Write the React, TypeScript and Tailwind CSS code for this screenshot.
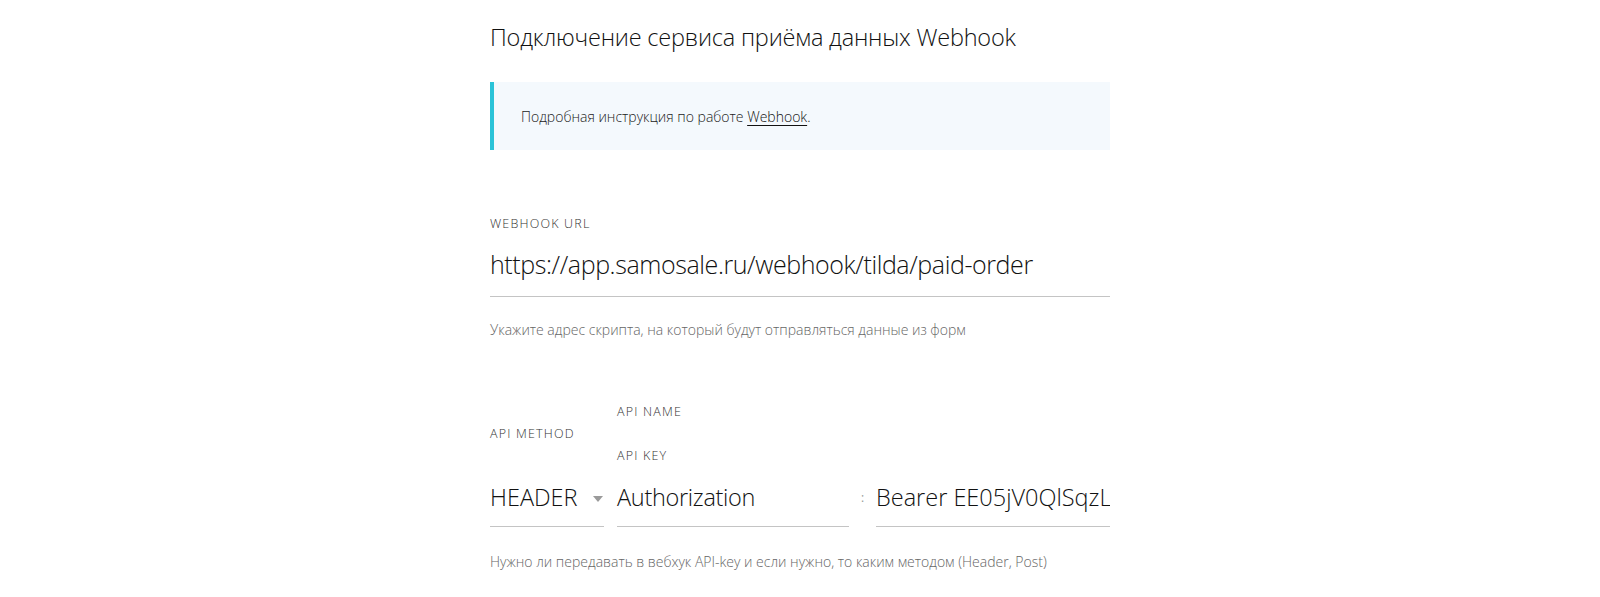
import React from "react";

const font = { fontFamily: '"Open Sans", "Liberation Sans", sans-serif' };

export default function App() {
  return (
    <div className="w-full min-h-[597px] bg-white text-[#000]" style={font}>
      <div className="w-[620px] mx-auto pt-[22px]">
        <h1 className="text-[23.5px] leading-[30px] font-light text-[#111] tracking-[-0.2px]">
          Подключение сервиса приёма данных Webhook
        </h1>
        <div className="mt-[30px] h-[68px] bg-[#f4f9fd] border-l-[4px] border-[#2bc3d8] flex items-center pl-[27px]">
          <p className="text-[14px] font-light text-[#222] leading-[20px] pt-[2px]">
            Подробная инструкция по работе{" "}
            <a className="underline underline-offset-[3px] text-[#111]">Webhook</a>.
          </p>
        </div>

        <div className="mt-[66px]">
          <div className="text-[12.5px] leading-[16px] font-light tracking-[1.2px] text-[#333] uppercase">
            Webhook URL
          </div>
          <div className="mt-[15px] border-b border-[#c4c4c4] pb-[15px]">
            <div className="text-[25px] leading-[34px] font-light text-[#111] tracking-[-0.4px]">
              https://app.samosale.ru/webhook/tilda/paid-order
            </div>
          </div>
          <div className="mt-[24px] text-[14px] leading-[18px] font-light text-[#666]">
            Укажите адрес скрипта, на который будут отправляться данные из форм
          </div>
        </div>

        <div className="mt-[65px] flex items-end">
          <div className="w-[114px] shrink-0">
            <div className="h-[60px] flex items-center">
              <span className="text-[12.5px] leading-[16px] font-light tracking-[1.2px] text-[#333] uppercase">
                Api method
              </span>
            </div>
            <div className="mt-[7px] border-b border-[#c4c4c4] h-[56px] pb-[12px] flex items-end justify-between">
              <span className="text-[23.5px] leading-[34px] font-light text-[#111]">HEADER</span>
              <svg width="10" height="6" viewBox="0 0 10 6" className="mr-[1px] mb-[12px]">
                <polygon points="0,0 10,0 5,6" fill="#9a9a9a" />
              </svg>
            </div>
          </div>
          <div className="ml-[13px] w-[232px] shrink-0">
            <div className="h-[60px] flex flex-col justify-between">
              <span className="text-[12.5px] leading-[16px] font-light tracking-[1.2px] text-[#333] uppercase">
                Api name
              </span>
              <span className="text-[12.5px] leading-[16px] font-light tracking-[1.2px] text-[#333] uppercase">
                Api key
              </span>
            </div>
            <div className="mt-[7px] border-b border-[#c4c4c4] h-[56px] pb-[12px] flex items-end">
              <span className="text-[23.5px] leading-[34px] font-light text-[#111] tracking-[-0.3px]">Authorization</span>
            </div>
          </div>
          <div className="w-[27px] shrink-0 h-[56px] pb-[12px] flex items-end justify-center">
            <span className="text-[12px] leading-[34px] text-[#999] pt-[3px]">:</span>
          </div>
          <div className="flex-1 min-w-0 border-b border-[#c4c4c4] h-[56px] pb-[12px] flex items-end overflow-hidden">
            <span className="text-[23.5px] leading-[34px] font-light text-[#111] whitespace-nowrap">Bearer EE05jV0QlSqzL</span>
          </div>
        </div>
        <div className="mt-[26px] text-[14px] leading-[18px] font-light text-[#666]">
          Нужно ли передавать в вебхук API-key и если нужно, то каким методом (Header, Post)
        </div>
      </div>
    </div>
  );
}
